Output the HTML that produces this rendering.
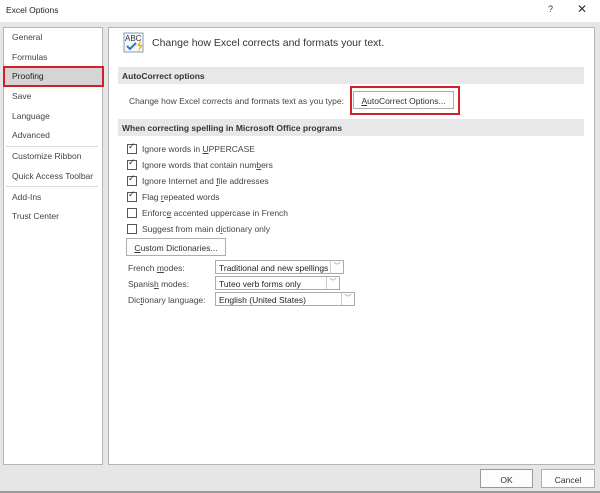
<!DOCTYPE html>
<html><head><style>
*{margin:0;padding:0;box-sizing:border-box}
body{width:600px;height:493px;background:#e6e6e6;font-family:"Liberation Sans",sans-serif;font-size:8.5px;color:#444;position:relative;overflow:hidden}
.a{position:absolute;white-space:nowrap}
.title{left:0;top:0;width:600px;height:22px;background:#fff}
.panel{background:#fff;border:1px solid #b4b4b4}
.bar{background:#e8e8e8;height:17px;font-weight:bold;color:#333;padding:4px 0 0 4px;font-size:8.5px}
.cb{width:10px;height:10px;border:1px solid #555;background:#fff}
.btn{background:#fdfdfd;border:1px solid #adadad;text-align:center;color:#333}
.sel{background:#fff;border:1px solid #aaa;color:#222;padding:2px 3px;height:14px}
.dd{position:absolute;right:0;top:0;width:13px;height:12px;border-left:1px solid #ccc;font-size:7px;color:#777;text-align:center;line-height:12px}
.sep{height:1px;background:#ddd;left:6px;width:92px}
</style></head><body>
<div class="a title"></div>
<div class="a" style="left:6px;top:5px;color:#222;font-size:8.5px">Excel Options</div>
<div class="a" style="left:548px;top:4px;color:#333;font-size:9px">?</div>
<div class="a" style="left:577px;top:2px;color:#333;font-size:12px">✕</div>
<div class="a" style="left:0;top:491px;width:600px;height:2px;background:#999"></div>

<div class="a panel" style="left:3px;top:27px;width:100px;height:438px"></div>
<div class="a" style="left:12px;top:32px">General</div>
<div class="a" style="left:12px;top:52px">Formulas</div>
<div class="a" style="left:3px;top:66px;width:101px;height:21px;background:#d5d5d5;border:2px solid #d0212a"></div>
<div class="a" style="left:12px;top:71px;color:#222">Proofing</div>
<div class="a" style="left:12px;top:91px">Save</div>
<div class="a" style="left:12px;top:111px">Language</div>
<div class="a" style="left:12px;top:130px">Advanced</div>
<div class="a sep" style="top:146px"></div>
<div class="a" style="left:12px;top:151px">Customize Ribbon</div>
<div class="a" style="left:12px;top:171px">Quick Access Toolbar</div>
<div class="a sep" style="top:186px"></div>
<div class="a" style="left:12px;top:192px">Add-Ins</div>
<div class="a" style="left:12px;top:211px">Trust Center</div>

<div class="a panel" style="left:108px;top:27px;width:487px;height:438px"></div>
<svg class="a" style="left:123px;top:32px" width="24" height="22" viewBox="0 0 24 22">
<rect x="1" y="1" width="19" height="19" fill="#f4f7fb" stroke="#8a9bb0"/>
<text x="2" y="9" font-size="8" font-family="Liberation Sans" fill="#334">ABC</text>
<path d="M4 14l3 3 6-6" stroke="#2a78c8" stroke-width="2" fill="none"/>
<path d="M18 8l-4 6h3l-2 6 5-7h-3z" fill="#f0b400"/>
</svg>
<div class="a" style="left:152px;top:37px;font-size:10.5px;color:#333">Change how Excel corrects and formats your text.</div>

<div class="a bar" style="left:118px;top:67px;width:466px">AutoCorrect options</div>
<div class="a" style="left:129px;top:96px">Change how Excel corrects and formats text as you type:</div>
<div class="a" style="left:350px;top:86px;width:110px;height:29px;border:2px solid #d0212a"></div>
<div class="a btn" style="left:353px;top:91px;width:101px;height:18px;padding-top:4px"><u>A</u>utoCorrect Options...</div>

<div class="a bar" style="left:118px;top:119px;width:466px">When correcting spelling in Microsoft Office programs</div>
<div class="a cb" style="left:127px;top:144px"></div><div class="a" style="left:128px;top:141px;font-size:9px;color:#333">✓</div>
<div class="a" style="left:142px;top:144px">Ignore words in <u>U</u>PPERCASE</div>
<div class="a cb" style="left:127px;top:160px"></div><div class="a" style="left:128px;top:157px;font-size:9px;color:#333">✓</div>
<div class="a" style="left:142px;top:160px">Ignore words that contain num<u>b</u>ers</div>
<div class="a cb" style="left:127px;top:176px"></div><div class="a" style="left:128px;top:173px;font-size:9px;color:#333">✓</div>
<div class="a" style="left:142px;top:176px">Ignore Internet and <u>f</u>ile addresses</div>
<div class="a cb" style="left:127px;top:192px"></div><div class="a" style="left:128px;top:189px;font-size:9px;color:#333">✓</div>
<div class="a" style="left:142px;top:192px">Flag <u>r</u>epeated words</div>
<div class="a cb" style="left:127px;top:208px"></div>
<div class="a" style="left:142px;top:208px">Enforc<u>e</u> accented uppercase in French</div>
<div class="a cb" style="left:127px;top:224px"></div>
<div class="a" style="left:142px;top:224px">Suggest from main d<u>i</u>ctionary only</div>
<div class="a btn" style="left:126px;top:238px;width:100px;height:18px;padding-top:4px"><u>C</u>ustom Dictionaries...</div>

<div class="a" style="left:128px;top:263px">French <u>m</u>odes:</div>
<div class="a sel" style="left:215px;top:260px;width:129px">Traditional and new spellings<div class="dd">﹀</div></div>
<div class="a" style="left:128px;top:279px">Spanis<u>h</u> modes:</div>
<div class="a sel" style="left:215px;top:276px;width:125px">Tuteo verb forms only<div class="dd">﹀</div></div>
<div class="a" style="left:128px;top:295px">Dic<u>t</u>ionary language:</div>
<div class="a sel" style="left:215px;top:292px;width:140px">English (United States)<div class="dd">﹀</div></div>

<div class="a btn" style="left:480px;top:469px;width:53px;height:19px;padding-top:5px;border-color:#999">OK</div>
<div class="a btn" style="left:541px;top:469px;width:54px;height:19px;padding-top:5px">Cancel</div>
</body></html>
